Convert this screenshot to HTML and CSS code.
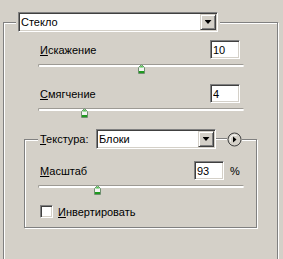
FILE: index.html
```html
<!DOCTYPE html>
<html lang="ru">
<head>
    <meta charset="UTF-8">
    <title>Стекло</title>
    <link rel="stylesheet" href="styles.css">
</head>
<body>
    <div class="panel">
        <fieldset class="group group-main">
            <legend class="group-legend legend-main">
                <div class="select select-filter">
                    <span class="select-value">Стекло</span>
                    <span class="select-btn"><span class="arrow-down"></span></span>
                </div>
            </legend>

            <div class="field-row row-first">
                <label class="field-label"><u>И</u>скажение</label>
                <input class="num-input" type="text" value="10">
            </div>
            <div class="slider">
                <div class="slider-track"></div>
                <span class="slider-thumb" style="left: 50%">
                    <svg width="7" height="10" viewBox="0 0 7 10"><path d="M3.5 0.5 L6.5 3.5 L6.5 9.5 L0.5 9.5 L0.5 3.5 Z" fill="#f4f4f4" stroke="#6f8f6f"/><path d="M3.5 1.2 L5.8 3.5 L1.2 3.5 Z" fill="#4cc04c"/><rect x="1" y="7" width="5" height="2" fill="#1f9a1f"/></svg>
                </span>
            </div>

            <div class="field-row row-second">
                <label class="field-label"><u>С</u>мягчение</label>
                <input class="num-input" type="text" value="4">
            </div>
            <div class="slider">
                <div class="slider-track"></div>
                <span class="slider-thumb" style="left: 22.5%">
                    <svg width="7" height="10" viewBox="0 0 7 10"><path d="M3.5 0.5 L6.5 3.5 L6.5 9.5 L0.5 9.5 L0.5 3.5 Z" fill="#f4f4f4" stroke="#6f8f6f"/><path d="M3.5 1.2 L5.8 3.5 L1.2 3.5 Z" fill="#4cc04c"/><rect x="1" y="7" width="5" height="2" fill="#1f9a1f"/></svg>
                </span>
            </div>

            <fieldset class="group group-texture">
                <legend class="group-legend legend-texture">
                    <label class="legend-label"><u>Т</u>екстура:</label>
                    <div class="select select-texture">
                        <span class="select-value">Блоки</span>
                        <span class="select-btn"><span class="arrow-down"></span></span>
                    </div>
                    <span class="connector"></span>
                    <span class="round-btn">
                        <svg width="15" height="15" viewBox="0 0 15 15"><circle cx="7.5" cy="7.5" r="6.5" fill="#d4d0c8" stroke="#404040"/><path d="M3.5 9.5 A4.5 4.5 0 0 1 9.5 3.5" fill="none" stroke="#fff"/><path d="M6 4.5 L9.5 7.5 L6 10.5 Z" fill="#000"/></svg>
                    </span>
                </legend>

                <div class="field-row row-scale">
                    <label class="field-label"><u>М</u>асштаб</label>
                    <input class="num-input" type="text" value="93">
                    <span class="unit">%</span>
                </div>
                <div class="slider">
                    <div class="slider-track"></div>
                    <span class="slider-thumb" style="left: 28.8%">
                        <svg width="7" height="10" viewBox="0 0 7 10"><path d="M3.5 0.5 L6.5 3.5 L6.5 9.5 L0.5 9.5 L0.5 3.5 Z" fill="#f4f4f4" stroke="#6f8f6f"/><path d="M3.5 1.2 L5.8 3.5 L1.2 3.5 Z" fill="#4cc04c"/><rect x="1" y="7" width="5" height="2" fill="#1f9a1f"/></svg>
                    </span>
                </div>

                <label class="check-row">
                    <span class="check-box"></span>
                    <span><u>И</u>нвертировать</span>
                </label>
            </fieldset>
        </fieldset>
    </div>
</body>
</html>
```

FILE: styles.css
```css
/* Панель фильтра "Стекло" */
html, body {
    margin: 0;
    padding: 0;
    background-color: #d4d0c8;
    overflow: hidden;
}

body {
    font-family: "Liberation Sans", Arial, sans-serif;
    font-size: 11px;
    color: #000;
}

u {
    text-decoration: underline;
    text-underline-offset: 1px;
}

.panel {
    width: 283px;
    height: 259px;
    padding: 12px 0 0 3px;
    box-sizing: border-box;
    overflow: hidden;
}

/* Рамки групп */
.group {
    margin: 0;
    border: 1px solid #808080;
    box-shadow: 1px 1px 0 #fff, inset 1px 1px 0 #fff;
    min-width: 0;
}

.group-main {
    width: 275px;
    height: 320px;
    box-sizing: border-box;
    padding: 0 33px 0 34px;
}

.group-legend {
    background-color: #d4d0c8;
    padding: 0 2px;
    display: flex;
    align-items: center;
    height: 20px;
}

.legend-main {
    margin-left: -22px;
}

.group-texture {
    margin: 11px -13px 0 -14px;
    padding: 0 12px 9px 13px;
}

.legend-texture {
    padding: 0 0 0 2px;
}

.legend-label {
    width: 56px;
}

.connector {
    width: 11px;
    height: 0;
    border-top: 1px solid #808080;
    border-bottom: 1px solid #fff;
}

.round-btn {
    display: flex;
    width: 15px;
    height: 15px;
}

/* Выпадающие списки */
.select {
    display: flex;
    align-items: center;
    height: 20px;
    box-sizing: border-box;
    background-color: #fff;
    border: 1px solid;
    border-color: #808080 #fff #fff #808080;
    box-shadow: inset 1px 1px 0 #404040, inset -1px -1px 0 #d4d0c8;
    padding: 1px 1px 1px 2px;
}

.select-filter {
    width: 200px;
}

.select-texture {
    width: 120px;
}

.select-value {
    flex: 1;
}

.select-btn {
    display: flex;
    align-items: center;
    justify-content: center;
    width: 16px;
    height: 16px;
    box-sizing: border-box;
    background-color: #d4d0c8;
    border: 1px solid;
    border-color: #d4d0c8 #404040 #404040 #d4d0c8;
    box-shadow: inset 1px 1px 0 #fff, inset -1px -1px 0 #808080;
}

.arrow-down {
    width: 7px;
    height: 4px;
    background-color: #000;
    clip-path: polygon(0 0, 100% 0, 50% 100%);
}

/* Строки с полями */
.field-row {
    display: flex;
    align-items: center;
    margin-right: 4px;
    margin-left: 2px;
}

.row-first {
    margin-top: 8px;
}

.row-second {
    margin-top: 10px;
}

.row-scale {
    margin-top: 12px;
}

.field-label {
    flex: 1;
}

.num-input {
    width: 30px;
    height: 19px;
    box-sizing: border-box;
    margin: 0;
    padding: 0 0 0 2px;
    font: inherit;
    color: #000;
    background-color: #fff;
    border: 1px solid;
    border-color: #808080 #fff #fff #808080;
    box-shadow: inset 1px 1px 0 #404040, inset -1px -1px 0 #d4d0c8;
    outline: none;
}

.unit {
    width: 10px;
    margin-left: 6px;
}

/* Ползунки */
.slider {
    position: relative;
    height: 10px;
    margin-top: 2px;
}

.slider-track {
    margin-top: 5px;
    height: 2px;
    background-color: #fff;
    border-top: 1px solid #9d9a94;
    border-left: 1px solid #9d9a94;
    border-radius: 2px;
}

.slider-thumb {
    position: absolute;
    top: 0;
    width: 7px;
    height: 10px;
    margin-left: -3px;
    display: flex;
}

.row-second + .slider {
    margin-top: 3px;
}

/* Флажок */
.check-row {
    display: flex;
    align-items: center;
    gap: 5px;
    margin: 10px 0 0 2px;
}

.check-box {
    width: 13px;
    height: 13px;
    box-sizing: border-box;
    background-color: #fff;
    border: 1px solid;
    border-color: #808080 #fff #fff #808080;
    box-shadow: inset 1px 1px 0 #404040, inset -1px -1px 0 #d4d0c8;
}
```
